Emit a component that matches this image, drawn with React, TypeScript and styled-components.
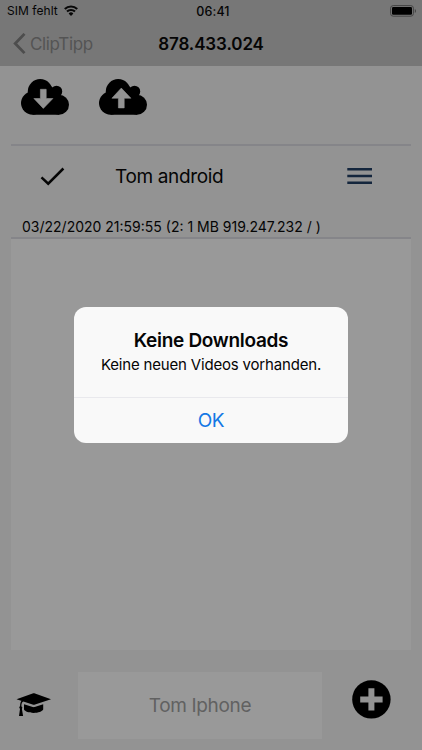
import React from "react";
import styled, { createGlobalStyle } from "styled-components";

const GlobalStyle = createGlobalStyle`
  * { box-sizing: border-box; }
  body { margin: 0; background: #939393; }
`;

const Screen = styled.div`
  position: relative;
  width: 422px;
  height: 750px;
  overflow: hidden;
  display: flex;
  flex-direction: column;
  background: #939393;
  color: #050505;
  font-family: Inter, "Liberation Sans", sans-serif;
`;

const TopArea = styled.header`
  height: 66px;
  flex: none;
  background: #777777;
`;

const Bar = styled.div<{ $height: number; $shift?: number }>`
  display: grid;
  grid-template-columns: 1fr auto 1fr;
  align-items: center;
  height: ${(p) => p.$height}px;
  padding-left: ${(p) => p.$shift ?? 0}px;
`;

const Cluster = styled.div<{ $left: number; $gap: number }>`
  display: flex;
  align-items: center;
  gap: ${(p) => p.$gap}px;
  padding-left: ${(p) => p.$left}px;
`;

const BatterySlot = styled.div`
  display: flex;
  justify-content: flex-end;
  padding-right: 5px;
`;

const Label = styled.span<{ $size: number; $weight?: number; $color?: string; $spacing?: number }>`
  font-size: ${(p) => p.$size}px;
  font-weight: ${(p) => p.$weight ?? 400};
  color: ${(p) => p.$color ?? "#050505"};
  letter-spacing: ${(p) => p.$spacing ?? 0}px;
  line-height: 1.2;
  white-space: nowrap;
`;

const Toolbar = styled.div`
  display: flex;
  align-items: flex-start;
  gap: 30px;
  height: 78px;
  flex: none;
  margin: 0 11px;
  padding: 13px 0 0 10px;
`;

const IconButton = styled.button`
  display: flex;
  padding: 0;
  border: 0;
  background: none;
`;

const Entry = styled.section`
  height: 95px;
  flex: none;
  margin: 0 11px;
  border-top: 2px solid #858589;
  border-bottom: 2px solid #858589;
`;

const EntryRow = styled.div`
  display: grid;
  grid-template-columns: 104px 232px auto;
  align-items: center;
  height: 61px;
`;

const CheckSlot = styled.div`
  display: flex;
  padding-left: 29px;
`;

const EntryName = styled.div`
  display: flex;
  padding-top: 2px;
`;

const MenuSlot = styled.div`
  display: flex;
  padding-bottom: 1px;
`;

const Detail = styled.div`
  padding: 12px 0 0 11px;
  display: flex;
`;

const List = styled.main`
  height: 411px;
  flex: none;
  margin: 0 11px;
  background: #999999;
`;

const Footer = styled.footer`
  display: grid;
  grid-template-columns: 78px 244px 1fr;
  align-items: start;
  padding-top: 22px;
`;

const FooterSlot = styled.div<{ $top: number; $left: number }>`
  display: flex;
  padding: ${(p) => p.$top}px 0 0 ${(p) => p.$left}px;
`;

const NameField = styled.div`
  display: flex;
  align-items: center;
  justify-content: center;
  height: 67px;
  padding-top: 2px;
  background: #999999;
`;

const Dialog = styled.div`
  position: absolute;
  left: 74px;
  top: 307px;
  width: 274px;
  height: 136px;
  border-radius: 12px;
  background: #f9f9f9;
  display: flex;
  flex-direction: column;
`;

const DialogBody = styled.div`
  height: 91px;
  padding-top: 23px;
  display: flex;
  flex-direction: column;
  align-items: center;
  gap: 3px;
  border-bottom: 1px solid #e9e9ed;
`;

const DialogAction = styled.button`
  flex: 1;
  padding: 2px 0 0;
  border: 0;
  background: none;
  font-family: inherit;
`;

const Wifi = () => (
  <svg width="14" height="11" viewBox="0 0 14 11" fill="none" stroke="#080808" strokeWidth="2.1">
    <path d="M.8 4.1a8.8 8.8 0 0 1 12.4 0M3 6.6a5.65 5.65 0 0 1 8 0" />
    <path d="M7 10.9 4.6 8.5a3.4 3.4 0 0 1 4.8 0Z" fill="#080808" stroke="none" />
  </svg>
);

const Battery = () => (
  <svg width="27" height="12" viewBox="0 0 27 12">
    <rect x=".6" y=".6" width="22.8" height="10.6" rx="2.6" fill="none" stroke="#444" />
    <rect x="2" y="2" width="20" height="7.8" rx="1.2" fill="#000" />
    <path d="M24.8 4v4c1.6-.7 1.6-3.3 0-4Z" fill="#444" />
  </svg>
);

const BackChevron = () => (
  <svg width="13" height="22" viewBox="0 0 13 22" fill="none" stroke="#4d4d4d" strokeWidth="2.8">
    <path d="M11.5 .9 2.2 10.5l9.3 9.6" />
  </svg>
);

const Cloud = ({ arrow }: { arrow: string }) => (
  <svg width="48" height="36" viewBox="0 0 48 36">
    <circle cx="19.2" cy="12.4" r="12.4" />
    <circle cx="35.5" cy="12.4" r="5.7" />
    <circle cx="11.6" cy="24.1" r="11.6" />
    <circle cx="38" cy="25.7" r="10" />
    <path d="M11.6 17 30 7.2l9.5 8.6 2 10-3.5 9.9H11.6Z" />
    <path d={arrow} fill="#939393" stroke="#939393" strokeWidth=".6" strokeLinejoin="round" />
  </svg>
);

const Check = () => (
  <svg width="25" height="19" viewBox="0 0 25 19" fill="none" stroke="#050505" strokeWidth="2.5">
    <path d="m1.5 10.3 6.7 6.4L23.4 1.5" />
  </svg>
);

const Menu = () => (
  <svg width="26" height="18" viewBox="0 0 26 18" fill="#14263d">
    <path d="M.3 1h24.7v2.5H.3zM.3 7.7h24.7v2.5H.3zM.3 14.4h24.7v2.5H.3z" />
  </svg>
);

const Graduation = () => (
  <svg width="36" height="24" viewBox="0 0 36 24">
    <path d="M.5 6.2 17.3.3c.3-.1.7-.1 1 0L35 6.2 18.3 11.7c-.3.1-.7.1-1 0Z" />
    <path d="M8 11.3 16.7 14c.7.2 1.3.2 2 0L27.2 11.3v5.2c-1 2-5 3.4-9.6 3.4S9 18.5 8 16.5Z" />
    <path d="M7.6 8.2C5.7 9 5.4 10.8 5.4 13.2a1.9 1.9 0 0 1 .5 2.7L7.1 23H3l1-7.1a1.8 1.8 0 0 1 .1-2.8c0-2.8.5-4.6 1.600-5.700Z" />
  </svg>
);

const Plus = () => (
  <svg width="39" height="39" viewBox="0 0 39 39">
    <circle cx="19.4" cy="19.4" r="19.2" />
    <path d="M19.4 8.2v22.4M8.2 19.4h22.4" stroke="#939393" strokeWidth="6" />
  </svg>
);

export default function App() {
  return (
    <>
      <GlobalStyle />
      <Screen>
        <TopArea>
          <Bar $height={22} $shift={4}>
            <Cluster $left={3} $gap={6}>
              <Label $size={12} $spacing={0.05}>SIM fehlt</Label>
              <Wifi />
            </Cluster>
            <Label $size={12.5} $weight={500} $spacing={0.1}>06:41</Label>
            <BatterySlot><Battery /></BatterySlot>
          </Bar>
          <Bar $height={44}>
            <Cluster $left={13} $gap={4}>
              <BackChevron />
              <Label $size={17} $color="#545454" $spacing={-0.35}>ClipTipp</Label>
            </Cluster>
            <Label $size={17} $weight={600} $spacing={-0.1}>878.433.024</Label>
          </Bar>
        </TopArea>
        <Toolbar>
          <IconButton aria-label="Download">
            <Cloud arrow="M19.4 10.3h5.8v9.2h6.7L22.3 29.4l-9.4-9.9h6.5Z" />
          </IconButton>
          <IconButton aria-label="Upload">
            <Cloud arrow="M19.4 28.9h5.8v-9.7h6.7L22.3 9.1l-9.4 10.1h6.5Z" />
          </IconButton>
        </Toolbar>
        <Entry>
          <EntryRow>
            <CheckSlot><Check /></CheckSlot>
            <EntryName><Label $size={19} $spacing={-0.35}>Tom android</Label></EntryName>
            <MenuSlot><Menu /></MenuSlot>
          </EntryRow>
          <Detail><Label $size={14}>03/22/2020 21:59:55 (2: 1 MB 919.247.232 / )</Label></Detail>
        </Entry>
        <List />
        <Footer>
          <FooterSlot $top={21} $left={16}><Graduation /></FooterSlot>
          <NameField><Label $size={19} $color="#616161" $spacing={-0.35}>Tom Iphone</Label></NameField>
          <FooterSlot $top={8} $left={30}><Plus /></FooterSlot>
        </Footer>
        <Dialog role="alertdialog">
          <DialogBody>
            <Label $size={19} $weight={600} $spacing={-0.3}>Keine Downloads</Label>
            <Label $size={15} $spacing={-0.18}>Keine neuen Videos vorhanden.</Label>
          </DialogBody>
          <DialogAction><Label $size={19} $color="#1478e5" $spacing={-0.3}>OK</Label></DialogAction>
        </Dialog>
      </Screen>
    </>
  );
}
